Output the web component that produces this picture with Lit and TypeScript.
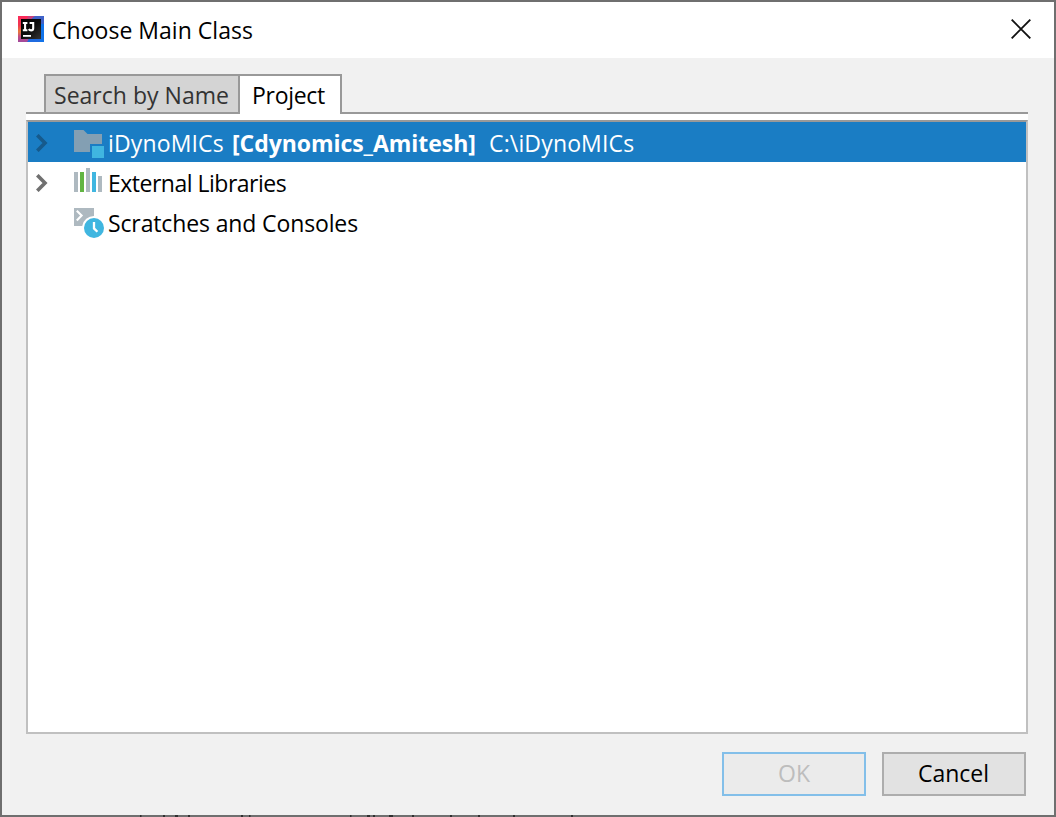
import { LitElement, html, css, svg } from "lit";
import { customElement, state } from "lit/decorators.js";

const appIcon = svg`
  <svg width="26" height="26" viewBox="0 0 26 26">
    <defs>
      <linearGradient id="side" x1="0" y1="0" x2="0" y2="1">
        <stop offset="0" stop-color="#fb2a5a"/><stop offset=".35" stop-color="#f0364f"/>
        <stop offset=".6" stop-color="#e8793a"/><stop offset=".8" stop-color="#c04a86"/>
        <stop offset="1" stop-color="#a04a9c"/>
      </linearGradient>
      <linearGradient id="dark" x1="0" y1="0" x2="1" y2="1">
        <stop offset="0" stop-color="#000"/><stop offset=".5" stop-color="#0c0c0c"/><stop offset="1" stop-color="#343434"/>
      </linearGradient>
    </defs>
    <rect width="26" height="26" fill="#3f62c8"/>
    <path d="M0 0H15L11 8L10 26H0Z" fill="url(#side)"/>
    <path d="M10 0H17L13 3H9Z" fill="#c8407c"/>
    <path d="M9 26L12 22H26V26Z" fill="#1f6be0"/>
    <path d="M22 8H26V26H22Z" fill="#1173ea"/>
    <rect x="3" y="3" width="20" height="20" fill="url(#dark)"/>
    <path d="M4.8 7H9.4M7.1 7V14.2M4.8 14.2H9.4M11.6 7H15.2V12.2Q15.2 14.4 13.1 14.4Q11.6 14.4 10.7 13.2" fill="none" stroke="#fff" stroke-width="2.1"/>
    <rect x="5" y="19" width="8" height="1.8" fill="#fff"/>
  </svg>`;

const closeIcon = svg`
  <svg width="20" height="20" viewBox="0 0 20 20">
    <path d="M.7.7L19.3 19.3M19.3.7L.7 19.3" stroke="#111" stroke-width="1.9" fill="none"/>
  </svg>`;

const arrowIcon = (color: string) => svg`
  <svg width="12" height="18" viewBox="0 0 12 18">
    <path d="M1.3 1.2L9 9L1.3 16.8" stroke=${color} stroke-width="3.6" fill="none"/>
  </svg>`;

const moduleIcon = svg`
  <svg width="32" height="32" viewBox="0 0 32 32">
    <path d="M2 4H11.5L15.5 8H30V18H18V26H2Z" fill="#839fb3"/>
    <rect x="20" y="20" width="12" height="12" fill="#40b6e0"/>
  </svg>`;

const librariesIcon = svg`
  <svg width="32" height="32" viewBox="0 0 32 32">
    <path d="M2 6H6V26H2ZM14 2H18V26H14ZM26 10H30V26H26Z" fill="#aeb9c0"/>
    <rect x="8" y="6" width="4" height="20" fill="#62b543"/>
    <rect x="20" y="6" width="4" height="20" fill="#40b6e0"/>
  </svg>`;

const scratchesIcon = svg`
  <svg width="32" height="32" viewBox="0 0 32 32">
    <path d="M2 2H22V10A12 12 0 0 0 10.2 20H2Z" fill="#aeb9c0"/>
    <path d="M4.8 4.8L9.6 9.6L4.8 14.4" stroke="#fff" stroke-width="2.1" fill="none"/>
    <circle cx="22" cy="22" r="10" fill="#40b6e0"/>
    <path d="M22 16V22.4L25.4 25.8" stroke="#fff" stroke-width="2.3" fill="none"/>
  </svg>`;

// Slivers of the window behind, visible through the bottom shadow: [x, width]
const slivers = [
  [140, 1.5], [163, 2], [175, 3], [188, 2], [241, 2], [249, 1.5], [350, 1.5], [367, 3],
  [373, 2], [389, 4], [412, 2], [450, 2], [478, 2], [513, 2], [571, 2],
];

@customElement("app-root")
export class AppRoot extends LitElement {
  @state() private selected = 0;

  static styles = css`
    :host { display: block; }
    .window {
      box-sizing: border-box; width: 1056px; height: 817px; position: relative;
      border: 2px solid #6f6f6f; background: #f1f1f1;
      display: flex; flex-direction: column;
      font: 23px/32px "Open Sans", "Noto Sans", sans-serif; color: #000;
    }
    svg { display: block; flex: none; }
    .titlebar { height: 56px; background: #fff; display: flex; align-items: center; padding: 0 23px 2px 16px; box-sizing: border-box; }
    .title { margin-left: 8px; flex: 1; letter-spacing: .03px; padding-top: 2px; }
    .close { border: 0; background: none; padding: 0; }
    .content { padding: 16px 26px 0 24px; display: flex; flex-direction: column; }
    .tabs { height: 40px; box-sizing: border-box; display: flex; padding-left: 18px; box-shadow: inset 0 -2px #999; }
    .tab { box-sizing: border-box; height: 40px; border: 2px solid #999; padding: 3px 0 0 8px; white-space: nowrap; }
    .tab.name { width: 194px; background: #d4d4d4; color: #333; border-right: 0; letter-spacing: .02px; }
    .tab.project { width: 104px; background: #fff; padding-left: 12px; letter-spacing: -.3px; border-bottom: 0; }
    .pane { background: #fff; padding-top: 6px; }
    .tree { box-sizing: border-box; height: 614px; border: 2px solid #c0c0c0; border-top-color: #999; background: #fff; }
    .row { height: 40px; display: flex; align-items: center; padding-left: 7.5px; }
    .row.selected { background: #1a7dc4; color: #fff; }
    .arrow { width: 12px; height: 18px; margin: 2px 24.5px 0 0; }
    .label { padding: 1px 0 0 4px; display: flex; white-space: nowrap; }
    .t0 { letter-spacing: .14px; }
    .t1 { letter-spacing: -.5px; }
    .t2 { letter-spacing: -.13px; }
    .bold { font-weight: 700; margin-left: 8.2px; letter-spacing: -.05px; }
    .path { margin-left: 13.2px; letter-spacing: .15px; }
    .actions { display: flex; justify-content: flex-end; gap: 16px; padding: 18px 2px 0 0; }
    .button { box-sizing: border-box; width: 144px; height: 44px; border: 2px solid #adadad; background: #e2e2e2; font: inherit; color: #000; padding: 0 1px 2px 0; letter-spacing: 0; }
    .button:disabled { border-color: #83bfe9; background: #ebebeb; color: #bdbdbd; padding-right: 0; }
    .slivers { position: absolute; left: -2px; bottom: -2px; }
  `;

  private row(i: number, arrow: boolean, icon: unknown, label: unknown) {
    const on = this.selected === i;
    return html`<div class="row ${on ? "selected" : ""}" @click=${() => (this.selected = i)}>
      <div class="arrow">${arrow ? arrowIcon(on ? "#165a8c" : "#707070") : ""}</div>
      ${icon}
      <div class="label">${label}</div>
    </div>`;
  }

  render() {
    return html`<div class="window">
      <div class="titlebar">
        ${appIcon}
        <div class="title">Choose Main Class</div>
        <button class="close" aria-label="Close">${closeIcon}</button>
      </div>
      <div class="content">
        <div class="tabs"><div class="tab name">Search by Name</div><div class="tab project">Project</div></div>
        <div class="pane"><div class="tree">
          ${this.row(0, true, moduleIcon, html`<span class="t0">iDynoMICs</span><span class="bold">[Cdynomics_Amitesh]</span><span class="path">C:\\iDynoMICs</span>`)}
          ${this.row(1, true, librariesIcon, html`<span class="t1">External Libraries</span>`)}
          ${this.row(2, false, scratchesIcon, html`<span class="t2">Scratches and Consoles</span>`)}
        </div></div>
        <div class="actions"><button class="button" disabled>OK</button><button class="button">Cancel</button></div>
      </div>
      <svg class="slivers" width="620" height="2" viewBox="0 0 620 2">
        ${slivers.map(([x, w]) => svg`<rect x=${x} y="0" width=${w} height="2" fill="#303030"/>`)}
      </svg>
    </div>`;
  }
}
